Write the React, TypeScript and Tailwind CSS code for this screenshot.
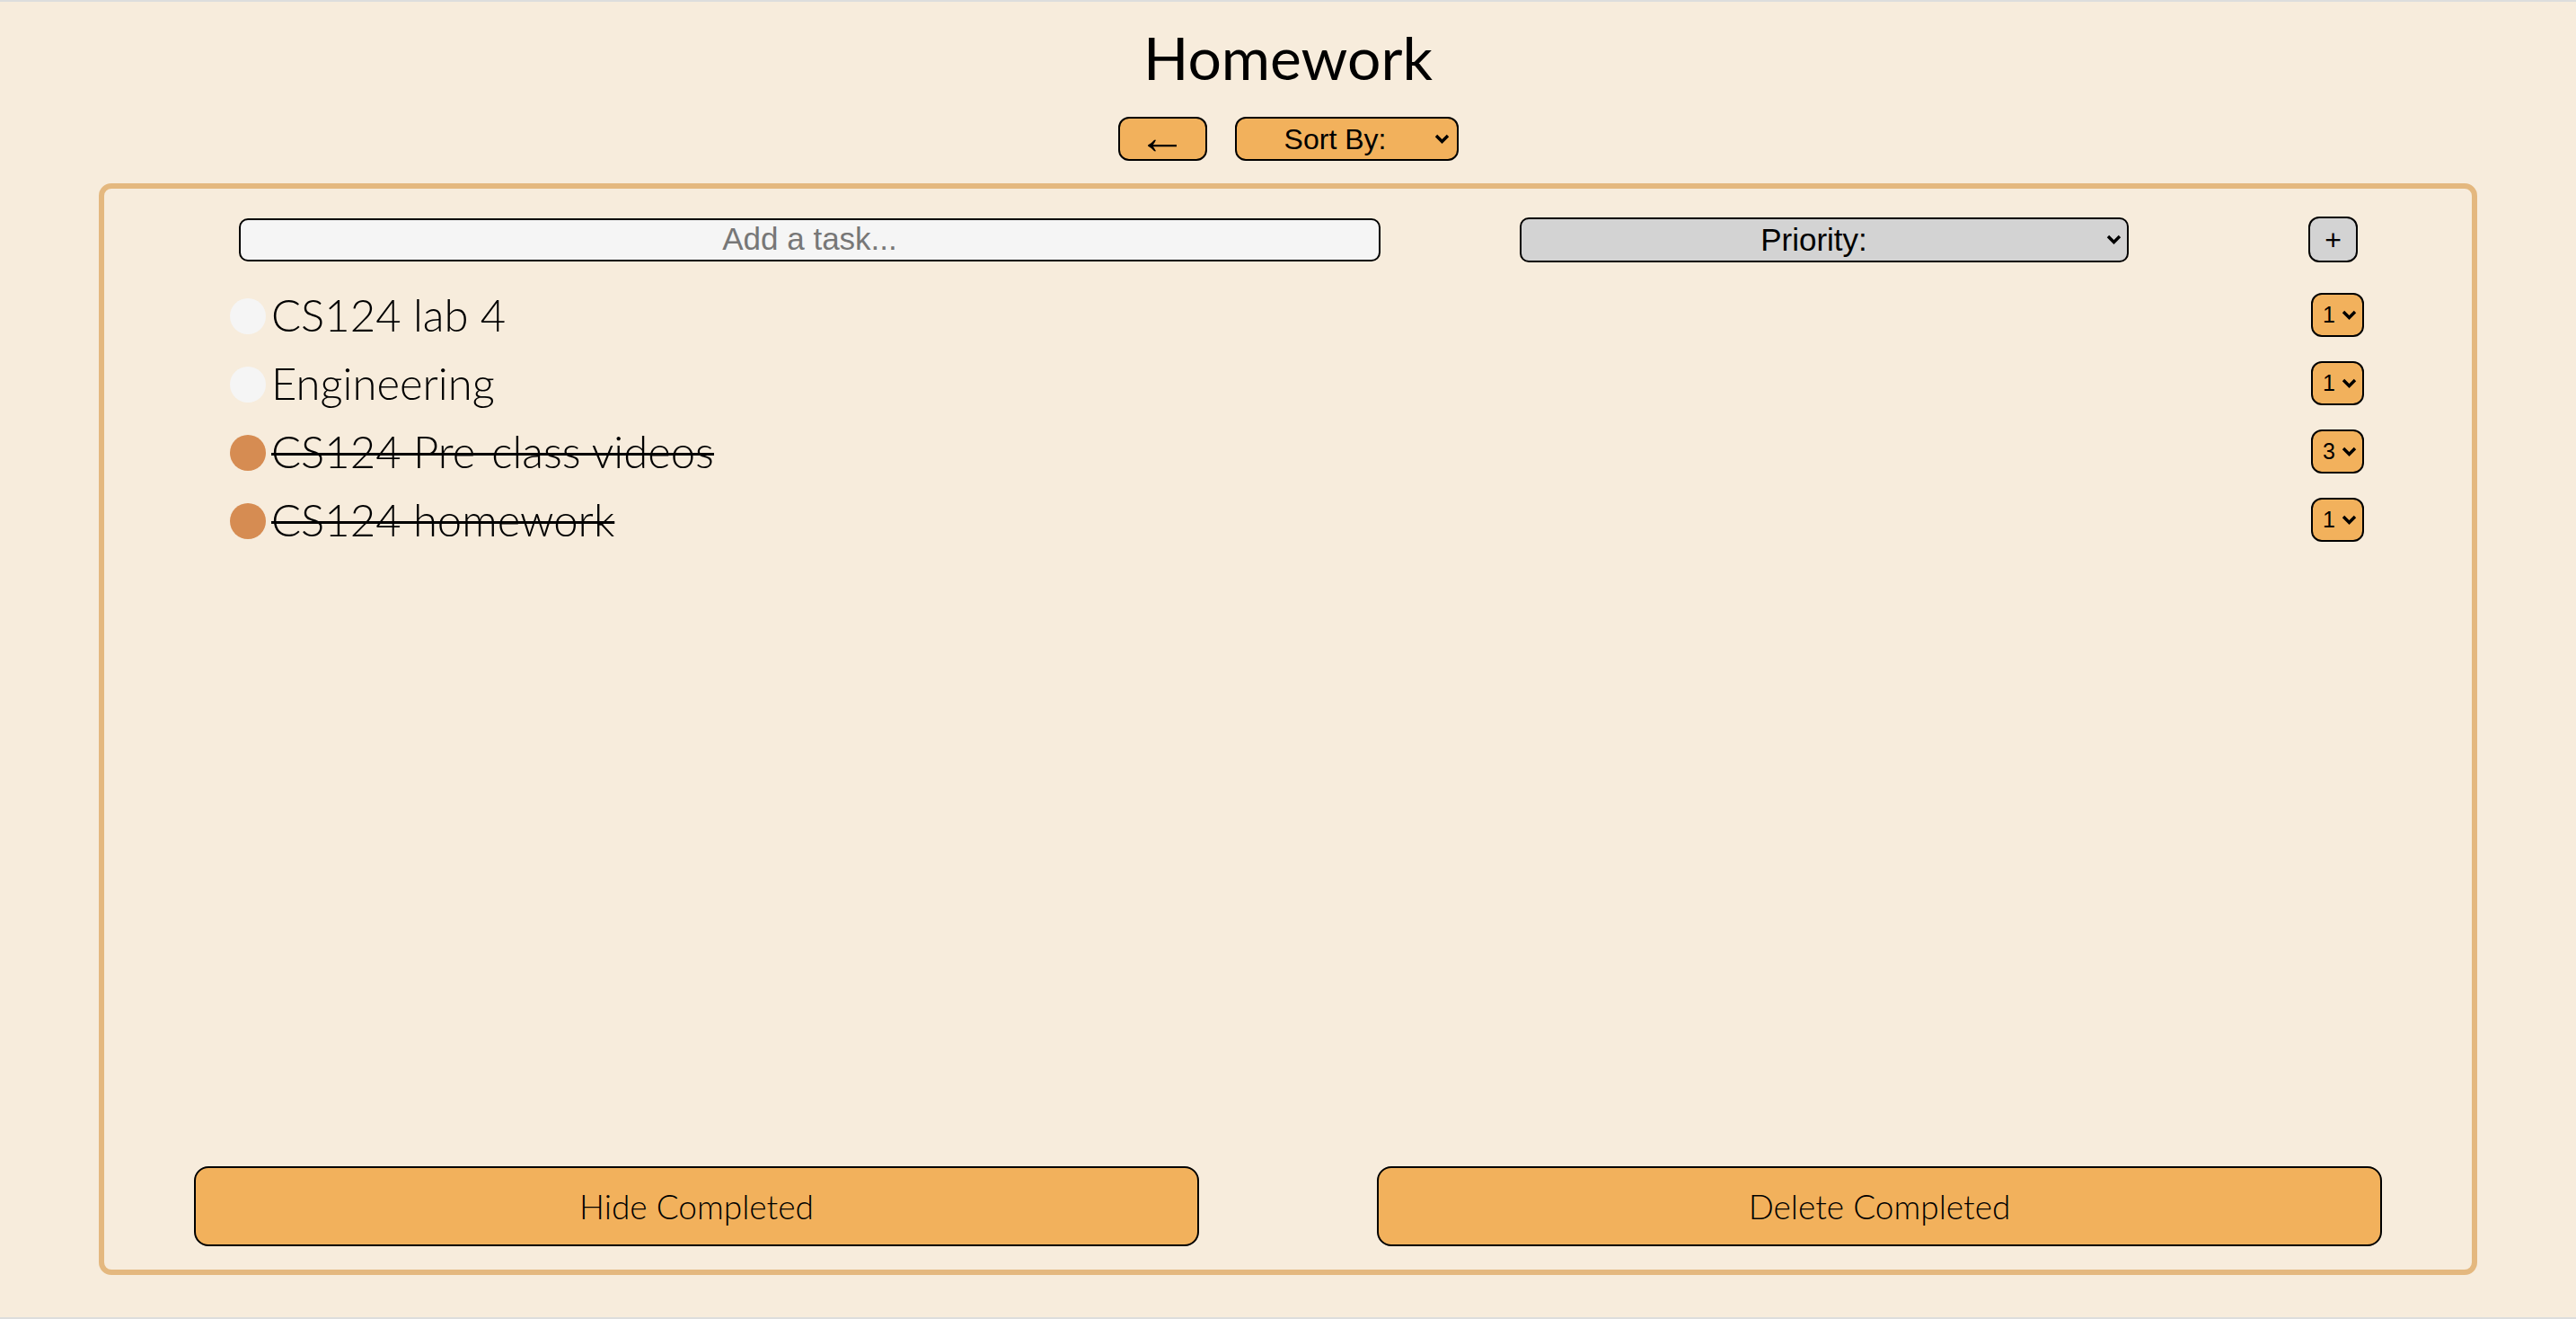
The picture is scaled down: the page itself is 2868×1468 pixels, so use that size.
import { useState } from 'react';

type Task = { id: number; name: string; done: boolean; priority: number };

const initialTasks: Task[] = [
  { id: 1, name: 'CS124 lab 4', done: false, priority: 1 },
  { id: 2, name: 'Engineering', done: false, priority: 1 },
  { id: 3, name: 'CS124 Pre-class videos', done: true, priority: 3 },
  { id: 4, name: 'CS124 homework', done: true, priority: 1 },
];

const sans = { fontFamily: '"Liberation Sans", Arial, sans-serif' };
const round = { fontFamily: 'Lato, "Noto Sans", sans-serif' };

function Chevron() {
  return (
    <svg width="17" height="11" viewBox="0 0 17 11" fill="none" aria-hidden="true">
      <path d="M2 2 L8.5 8.5 L15 2" stroke="black" strokeWidth="3.4" strokeLinejoin="miter" />
    </svg>
  );
}

export default function App() {
  const [tasks, setTasks] = useState(initialTasks);

  const toggle = (id: number) =>
    setTasks((ts) => ts.map((t) => (t.id === id ? { ...t, done: !t.done } : t)));

  return (
    <div className="h-[1468px] bg-[#f7ecdc] border-y-2 border-[#dddddd] flex flex-col items-center" style={round}>
      {/* title */}
      <h1 className="mt-[29px] text-[66px] leading-none font-normal text-black">Homework</h1>

      {/* back + sort */}
      <div className="mt-[33px] flex gap-[31px]" style={sans}>
        <button
          type="button"
          className="w-[99px] h-[49px] rounded-[12px] border-2 border-black bg-[#f2b15c] text-[54px] leading-none flex items-center justify-center pb-[6px]"
        >
          ←
        </button>
        <div className="w-[249px] h-[49px] rounded-[12px] border-2 border-black bg-[#f2b15c] flex items-center pr-[8px]">
          <span className="flex-1 text-center text-[32px] leading-none">Sort By:</span>
          <Chevron />
        </div>
      </div>

      {/* main panel */}
      <div className="mt-[25px] self-stretch mx-[110px] h-[1215px] border-[6px] border-[#e4b87f] rounded-[14px] flex flex-col">
        {/* add row */}
        <div className="mt-[31px] pl-[150px] flex items-center" style={sans}>
          <input
            placeholder="Add a task..."
            className="w-[1271px] h-[48px] rounded-[10px] border-2 border-black bg-[#f5f5f5] text-center text-[35px] placeholder:text-[#777777] outline-none"
          />
          <div className="ml-[155px] w-[678px] h-[50px] rounded-[10px] border-2 border-black bg-[#d3d3d3] flex items-center pr-[6px]">
            <span className="flex-1 text-center text-[35px] leading-none">Priority:</span>
            <Chevron />
          </div>
          <button
            type="button"
            className="ml-[200px] w-[55px] h-[51px] rounded-[12px] border-2 border-black bg-[#d3d3d3] text-[32px] leading-none flex items-center justify-center"
          >
            +
          </button>
        </div>

        {/* task list */}
        <div className="mt-[20px] flex flex-col">
          {tasks.map((t) => (
            <div key={t.id} className="h-[76px] flex items-center pl-[140px] pr-[120px]">
              <button
                type="button"
                onClick={() => toggle(t.id)}
                className={`w-[40px] h-[40px] mt-[4px] rounded-full shrink-0 ${t.done ? 'bg-[#d68c52]' : 'bg-[#f5f5f5]'}`}
              />
              <span
                className={`ml-[6px] text-[49px] leading-none font-light text-black ${t.done ? 'line-through decoration-[3px] decoration-black' : ''}`}
              >
                {t.name}
              </span>
              <div
                className="ml-auto w-[59px] h-[49px] rounded-[12px] border-2 border-black bg-[#f2b15c] flex items-center justify-between pl-[11px] pr-[6px]"
                style={sans}
              >
                <span className="text-[25px] leading-none">{t.priority}</span>
                <Chevron />
              </div>
            </div>
          ))}
        </div>

        {/* footer buttons */}
        <div className="mt-auto mb-[26px] px-[100px] grid grid-cols-2 gap-[198px]">
          <button
            type="button"
            className="h-[89px] rounded-[16px] border-2 border-black bg-[#f2b15c] text-[37px] font-light text-black"
          >
            Hide Completed
          </button>
          <button
            type="button"
            className="h-[89px] rounded-[16px] border-2 border-black bg-[#f2b15c] text-[37px] font-light text-black"
          >
            Delete Completed
          </button>
        </div>
      </div>
    </div>
  );
}
